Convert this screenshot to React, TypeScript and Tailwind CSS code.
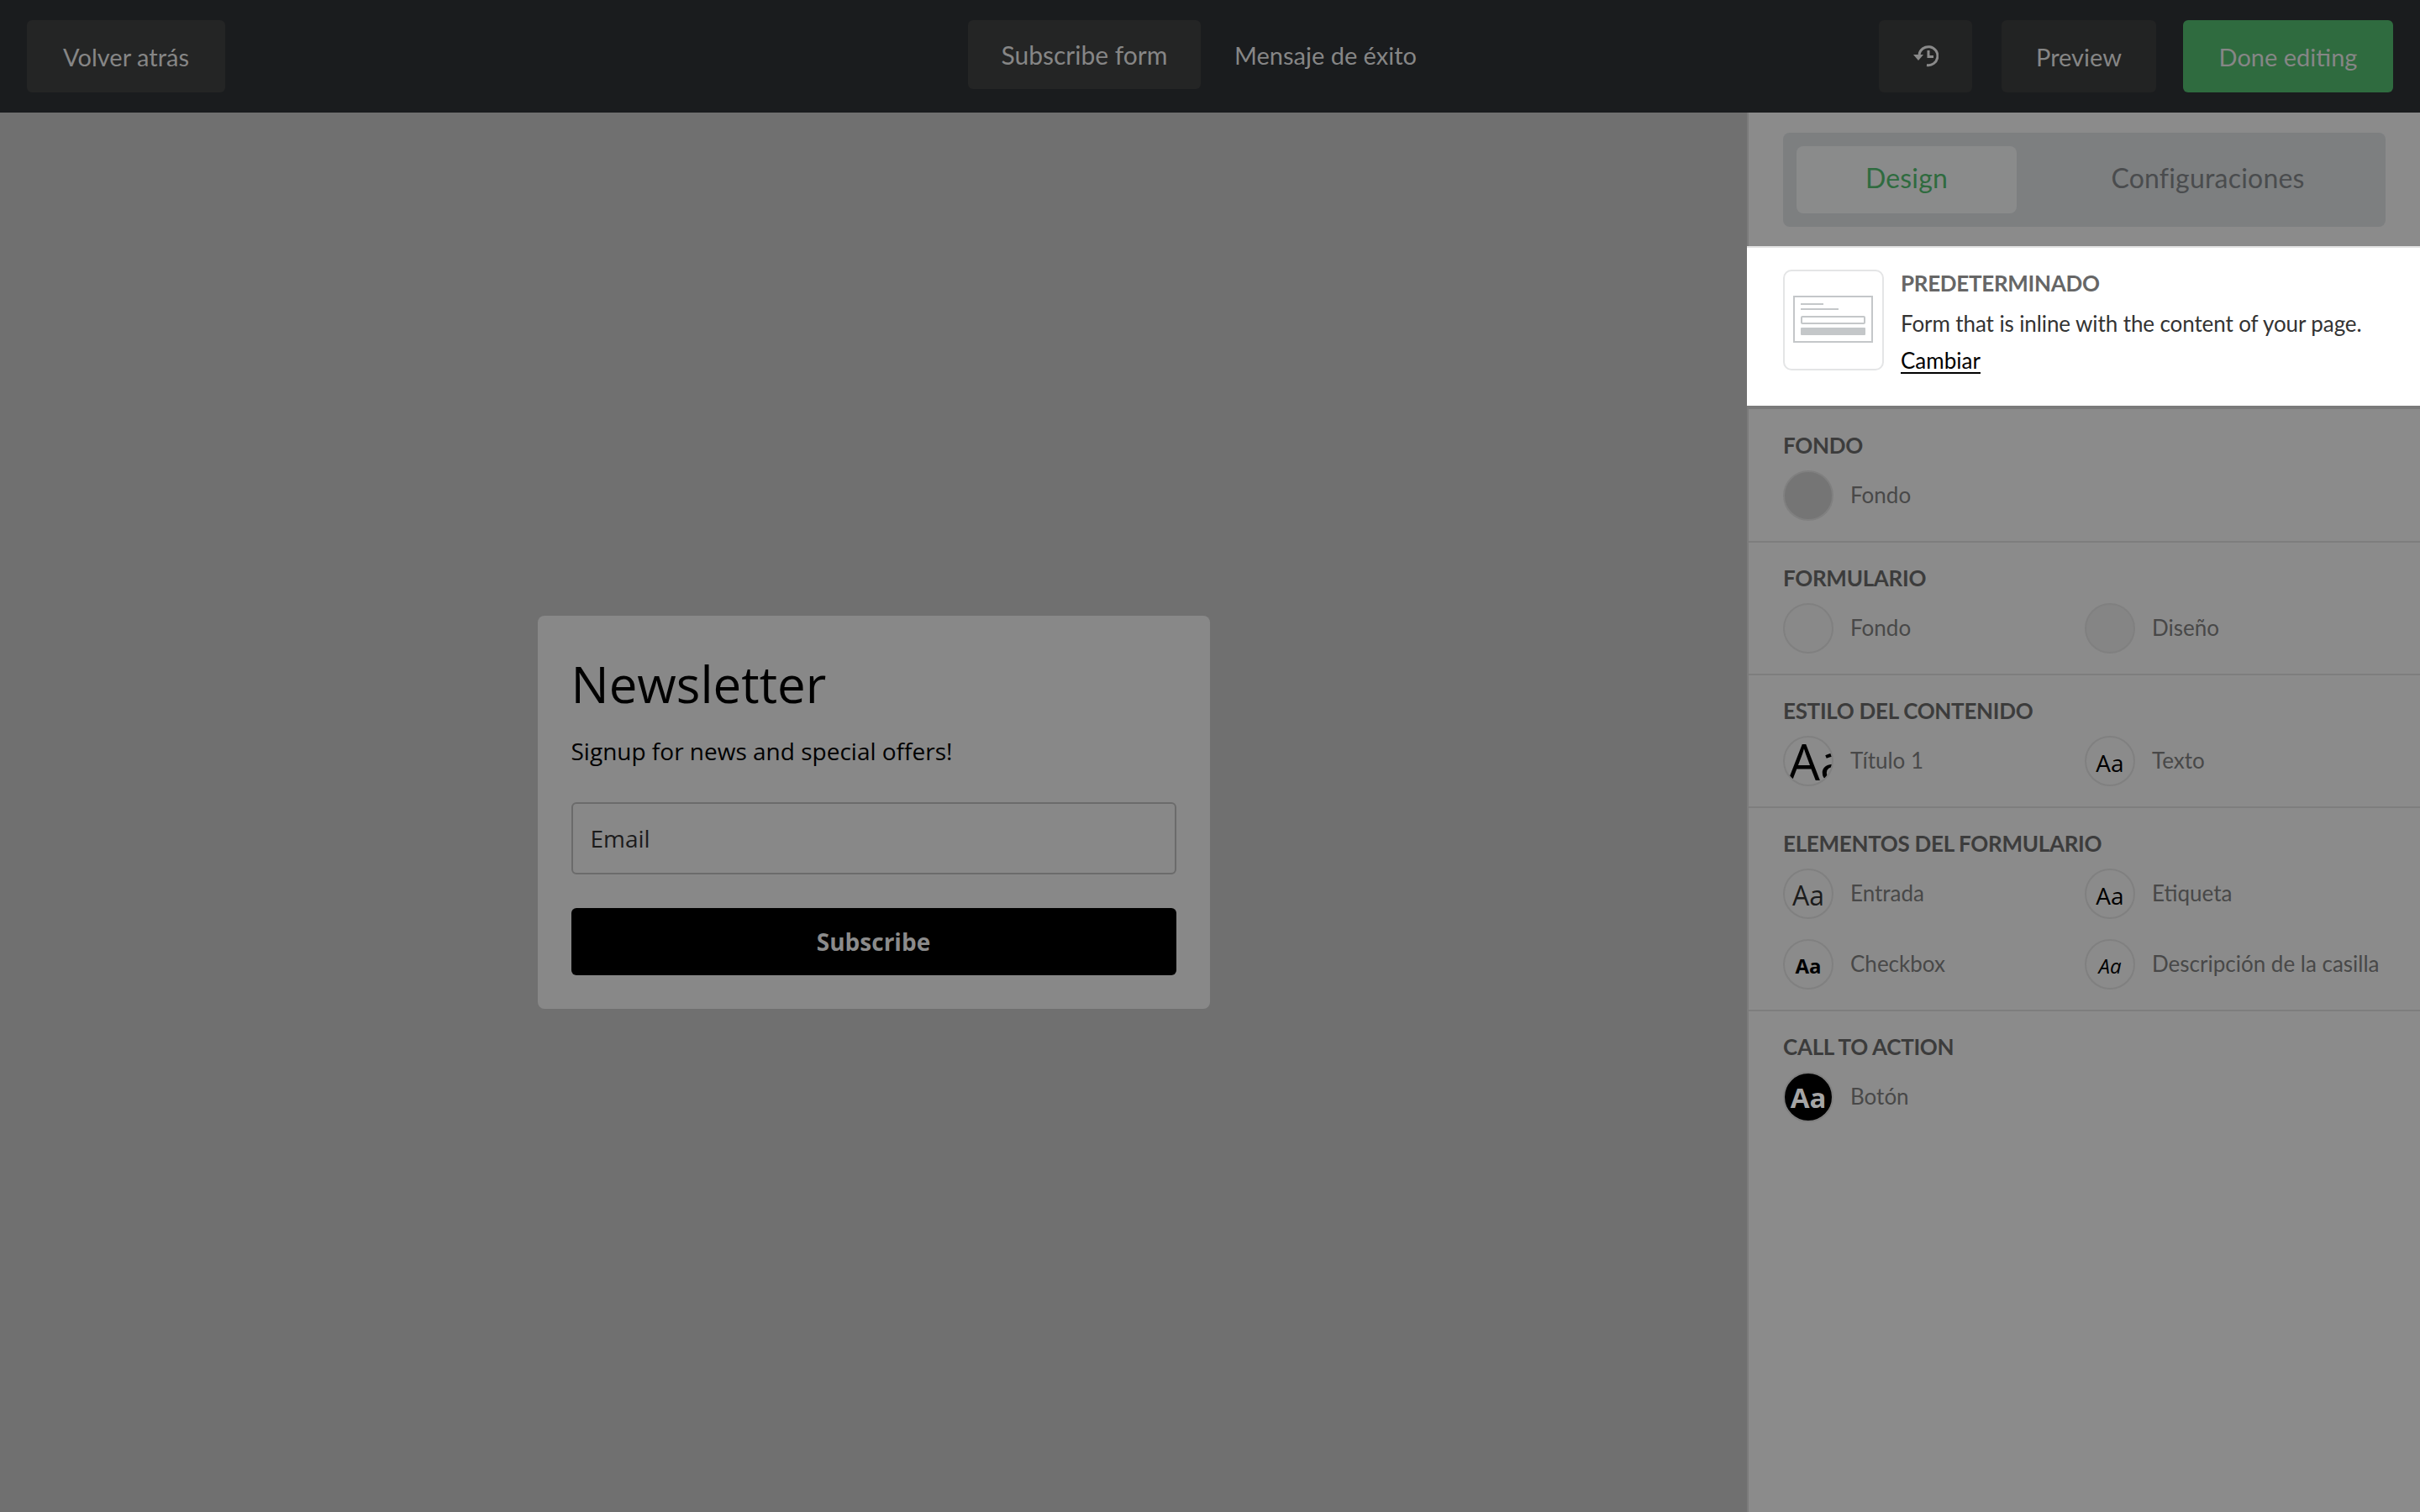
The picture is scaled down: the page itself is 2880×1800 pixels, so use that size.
import React from "react";

const ui = "font-['Lato','Liberation_Sans',sans-serif]";
const form = "font-['Open_Sans','Liberation_Sans',sans-serif]";

function HistoryIcon() {
  return (
    <svg width="30" height="26" viewBox="0 0 30 26" fill="none" aria-hidden="true">
      <path d="M16 23.5 A11 11 0 1 0 7 11" stroke="#8a8a8a" strokeWidth="3" strokeLinecap="butt" />
      <path d="M0 11 H12 L6 18 Z" fill="#8a8a8a" />
      <path d="M18 6 V13.5 H24" stroke="#8a8a8a" strokeWidth="3" />
    </svg>
  );
}

function TopButton({ children, className }: { children: React.ReactNode; className: string }) {
  return (
    <button className={`flex items-center justify-center rounded-[6px] leading-none text-[#868686] ${className}`}>
      {children}
    </button>
  );
}

function Swatch({ label, children, className = "" }: { label: string; children?: React.ReactNode; className?: string }) {
  return (
    <div className="flex h-[60px] items-center">
      <div className={`flex h-[60px] w-[60px] shrink-0 items-center justify-center overflow-hidden whitespace-nowrap rounded-full border-2 border-[#808080] ${className}`}>
        {children}
      </div>
      <span className="ml-[20px] whitespace-nowrap pb-[3px] text-[26px] leading-none text-[#484848]">{label}</span>
    </div>
  );
}

function Heading({ children }: { children: React.ReactNode }) {
  return <h3 className="mb-[16px] text-[26px] font-bold leading-[28px] tracking-[-0.3px] text-[#3c3c3c]">{children}</h3>;
}

function Section({ title, children }: { title: string; children: React.ReactNode }) {
  return (
    <section className="border-b-2 border-[#7e7e7e] px-[41px] pb-[24px] pt-[28px]">
      <Heading>{title}</Heading>
      {children}
    </section>
  );
}

const Aa = ({ className }: { className: string }) => <span className={`${form} ${className}`}>Aa</span>;

export default function App() {
  return (
    <div className={`flex h-[1800px] w-[2880px] flex-col overflow-hidden bg-[#717171] ${ui}`}>
      <header className="flex h-[134px] shrink-0 items-start bg-[#1a1c1e] px-[32px] pt-[24px]">
        <div className="flex flex-1 items-start">
          <TopButton className="h-[86px] w-[236px] bg-[#242525] text-[29px]">Volver atrás</TopButton>
        </div>
        <nav className="flex items-start pr-[42px]">
          <TopButton className="h-[82px] w-[277px] bg-[#242525] text-[30px]">Subscribe form</TopButton>
          <span className="ml-[40px] flex h-[82px] w-[217px] items-center whitespace-nowrap text-[29px] leading-none text-[#868686]">Mensaje de éxito</span>
        </nav>
        <div className="flex flex-1 items-start justify-end">
          <TopButton className="h-[86px] w-[111px] bg-[#222323]"><HistoryIcon /></TopButton>
          <TopButton className="ml-[35px] h-[86px] w-[184px] bg-[#222323] text-[29px]">Preview</TopButton>
          <TopButton className="ml-[32px] h-[86px] w-[250px] bg-[#2f6b3f] text-[29px]">Done editing</TopButton>
        </div>
      </header>

      <div className="flex min-h-0 flex-1">
        <main className={`flex flex-1 items-center justify-center bg-[#707070] ${form}`}>
          <div className="h-[468px] w-[800px] rounded-[8px] bg-[#888888] px-[40px] pt-[40px]">
            <h1 className="text-[60px] font-normal leading-[82px] text-black">Newsletter</h1>
            <p className="mt-[19px] text-[28px] leading-[40px] text-black">Signup for news and special offers!</p>
            <div className="mt-[41px] flex h-[86px] items-center rounded-[6px] border-2 border-[#6b6b6b] px-[21px] text-[28px] text-[#1c1c1c]">Email</div>
            <button className="mt-[40px] flex h-[80px] w-full items-center justify-center rounded-[6px] bg-black text-[28px] font-bold text-[#8b8b8b]">Subscribe</button>
          </div>
        </main>

        <aside className="flex w-[801px] shrink-0 flex-col bg-[#8b8b8b]">
          <div className="border-l-2 border-[#7c7c7c] px-[41px] pb-[23px] pt-[24px]">
            <div className="flex h-[112px] items-center rounded-[8px] bg-[#7d7f80] px-[16px] text-[32px] tracking-[0.2px]">
              <div className="flex h-[80px] w-[262px] items-center justify-center rounded-[8px] bg-[#8a8b8b] pb-[4px] text-[#2f6b3f]">Design</div>
              <div className="flex flex-1 items-center justify-center pb-[4px] pl-[32px] text-[#4a4c4e]">Configuraciones</div>
            </div>
          </div>

          <div className="flex h-[194px] shrink-0 border-b-4 border-t-2 border-b-[#7a7a7a] border-t-[#e3e3e3] bg-white pl-[43px] pt-[26px]">
            <div className="flex h-[120px] w-[120px] shrink-0 items-center justify-center rounded-[10px] border-2 border-[#e4e5e6]">
              <svg width="96" height="58" viewBox="0 0 96 58" fill="none" aria-hidden="true">
                <rect x="1" y="1" width="93" height="54" fill="none" stroke="#c4c7c9" strokeWidth="2" />
                <rect x="9" y="9" width="27" height="2" fill="#c4c7c9" />
                <rect x="9" y="15" width="45" height="2" fill="#c4c7c9" />
                <rect x="10" y="25" width="75" height="8" rx="1" fill="#fff" stroke="#c4c7c9" strokeWidth="2" />
                <rect x="9" y="38" width="77" height="9" rx="1" fill="#c4c7c9" />
              </svg>
            </div>
            <div className="ml-[20px]">
              <div className="mt-[2px] text-[26px] font-bold leading-[28px] tracking-[-0.3px] text-[#666666]">PREDETERMINADO</div>
              <p className="mt-[20px] text-[26px] leading-[28px] tracking-[-0.1px] text-[#333333]">Form that is inline with the content of your page.</p>
              <a className="mt-[16px] block w-fit border-b-2 border-black text-[26px] leading-[28px] text-black">Cambiar</a>
            </div>
          </div>

          <div className="flex-1 border-l-2 border-[#7c7c7c] pt-[1px]">
            <Section title="FONDO">
              <Swatch label="Fondo" className="bg-[#757575]" />
            </Section>
            <Section title="FORMULARIO">
              <div className="grid grid-cols-[359px_1fr]">
                <Swatch label="Fondo" className="bg-[#898989]" />
                <Swatch label="Diseño" className="bg-[#858585]" />
              </div>
            </Section>
            <Section title="ESTILO DEL CONTENIDO">
              <div className="grid grid-cols-[359px_1fr]">
                <Swatch label="Título 1" className="justify-start pl-[4px]"><Aa className="text-[60px] font-medium leading-none text-black" /></Swatch>
                <Swatch label="Texto"><Aa className="mt-[4px] text-[28px] leading-none text-black" /></Swatch>
              </div>
            </Section>
            <Section title="ELEMENTOS DEL FORMULARIO">
              <div className="grid grid-cols-[359px_1fr] gap-y-[24px]">
                <Swatch label="Entrada"><Aa className="mt-[4px] text-[32px] leading-none text-[#1c1c1c]" /></Swatch>
                <Swatch label="Etiqueta"><Aa className="mt-[4px] text-[28px] leading-none text-black" /></Swatch>
                <Swatch label="Checkbox"><Aa className="mt-[4px] text-[24px] font-bold leading-none text-black" /></Swatch>
                <Swatch label="Descripción de la casilla"><Aa className="mt-[4px] text-[24px] italic leading-none text-black" /></Swatch>
              </div>
            </Section>
            <section className="px-[41px] pt-[28px]">
              <Heading>CALL TO ACTION</Heading>
              <Swatch label="Botón" className="bg-black"><Aa className="text-[33px] font-bold leading-none text-[#a5a5a5]" /></Swatch>
            </section>
          </div>
        </aside>
      </div>
    </div>
  );
}
